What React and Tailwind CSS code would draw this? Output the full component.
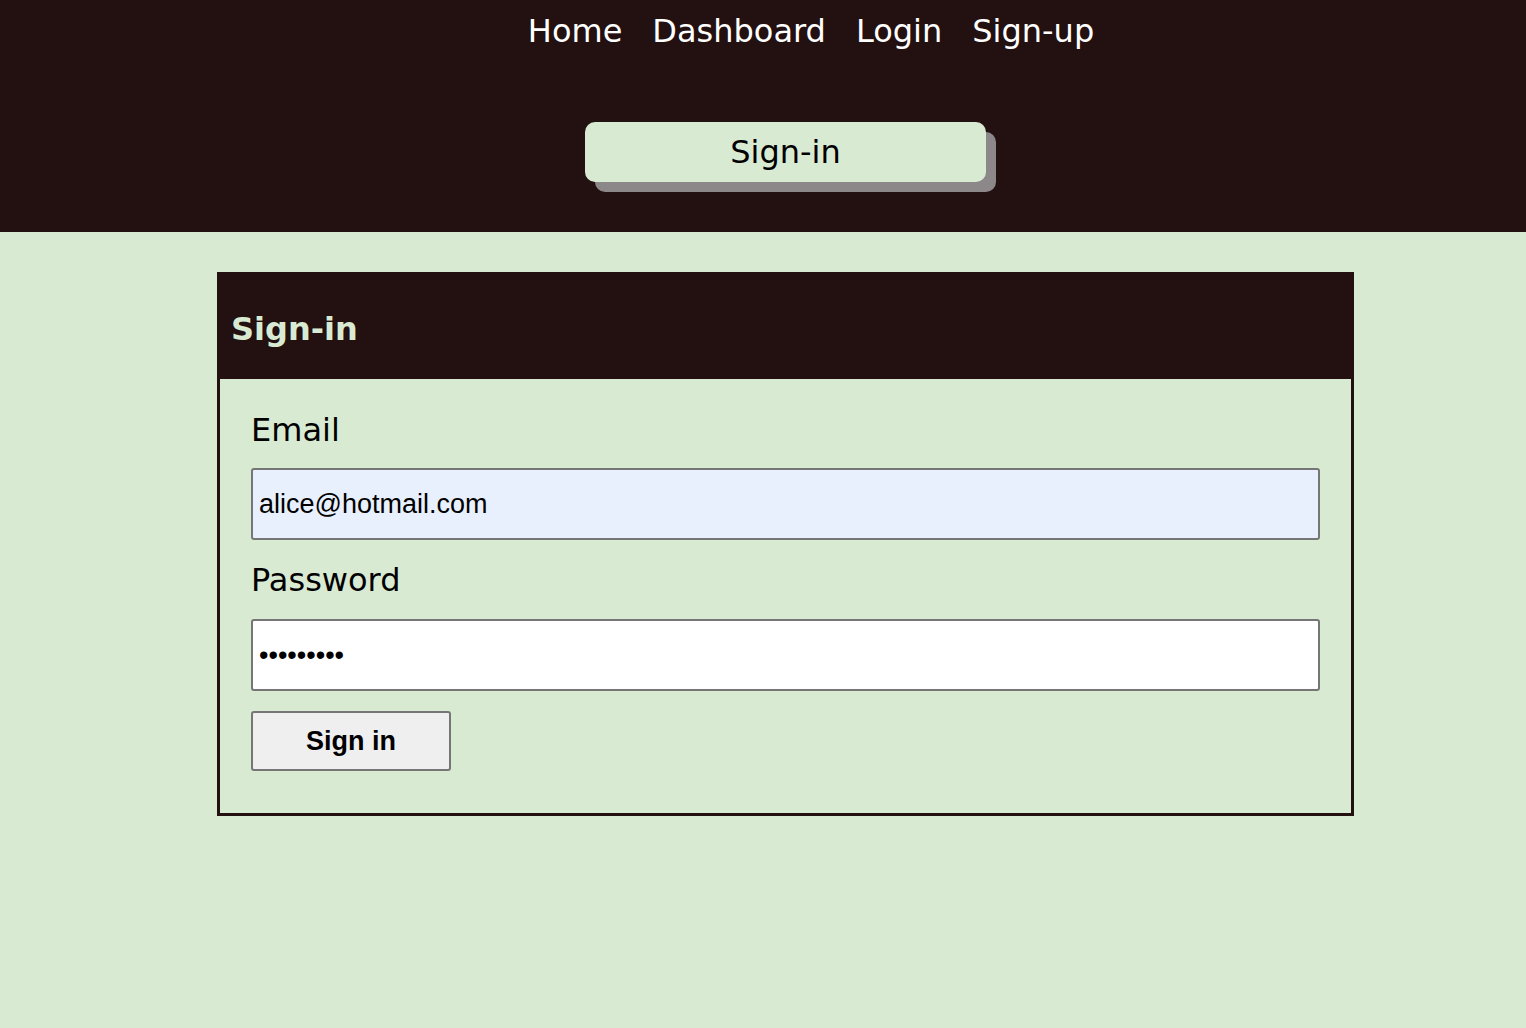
import React from "react";

export default function App() {
  return (
    <div className="min-h-[1028px] bg-[#d9ead3]" style={{ fontFamily: '"DejaVu Sans", Verdana, sans-serif' }}>
      <header className="h-[232px] bg-[#231010] flex flex-col items-center">
        <nav className="flex gap-[30px] text-[32px] leading-none text-white mt-[15px] ml-[96px]">
          <a>Home</a>
          <a>Dashboard</a>
          <a>Login</a>
          <a>Sign-up</a>
        </nav>
        <div className="mt-[75px] ml-[45px] w-[401px] h-[60px] rounded-[10px] bg-[#d9ead3] shadow-[10px_10px_0_#8c8889] flex items-center justify-center text-[32px] text-black">
          Sign-in
        </div>
      </header>
      <main className="pt-[40px] flex justify-center">
        <div className="w-[1137px] ml-[45px] border-[3px] border-[#231010]">
          <div className="h-[104px] bg-[#231010] flex items-center px-[11px] pt-[4px]">
            <h1 className="text-[32px] font-bold text-[#d9ead3]">Sign-in</h1>
          </div>
          <div className="px-[31px] pt-[35px] pb-[42px]">
            <label className="block text-[32px] leading-none mb-[22px]">Email</label>
            <input
              className="block w-full h-[72px] bg-[#e8f0fe] border-2 border-[#767676] rounded-[3px] px-[6px] text-[27px] text-black outline-none"
              style={{ fontFamily: '"Liberation Sans", Arial, sans-serif' }}
              defaultValue="alice@hotmail.com"
            />
            <label className="block text-[32px] leading-none mt-[24px] mb-[23px]">Password</label>
            <input
              type="password"
              className="block w-full h-[72px] bg-white border-2 border-[#767676] rounded-[3px] px-[6px] text-[27px] text-black outline-none"
              style={{ fontFamily: '"Liberation Sans", Arial, sans-serif' }}
              defaultValue="alice1234"
            />
            <button
              className="block mt-[20px] w-[200px] h-[60px] bg-[#efefef] border-2 border-[#767676] rounded-[3px] text-[27px] font-bold text-black"
              style={{ fontFamily: '"Liberation Sans", Arial, sans-serif' }}
            >
              Sign in
            </button>
          </div>
        </div>
      </main>
    </div>
  );
}
